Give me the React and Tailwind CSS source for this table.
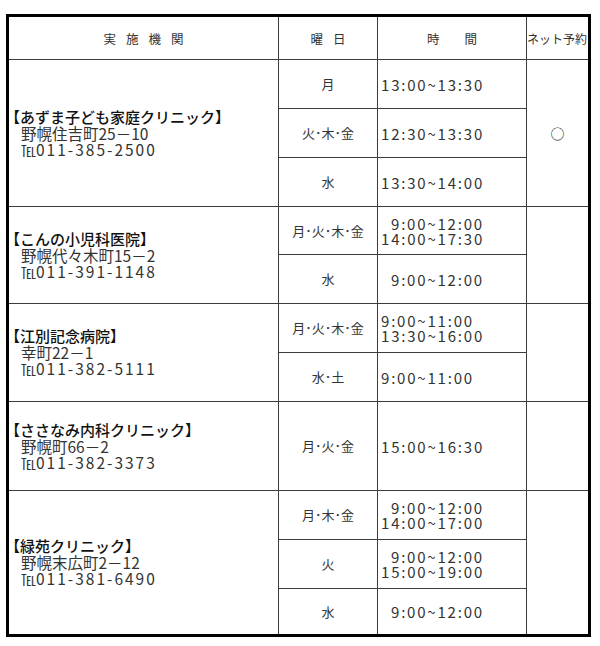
import React from "react"

const font = { fontFamily: '"Noto Sans CJK JP", "Noto Sans", sans-serif' }

const line = "border-[#3c3c3c]"

function Clinic({ name, addr, tel, row, last }) {
  return (
    <div className={`${row} col-start-1 border-r ${last ? "" : "border-b"} ${line} flex flex-col justify-center leading-[16px]`}>
      <div className="text-[15px] font-medium text-[#111] -ml-[4px] whitespace-nowrap">{name}</div>
      <div className="text-[15.5px] text-[#333] pl-[12px] whitespace-nowrap">{addr}</div>
      <div className="text-[15.5px] text-[#333] pl-[12px] whitespace-nowrap">
        <span className="text-[15px]">℡</span>
        <span className="tracking-[2px]">{tel}</span>
      </div>
    </div>
  )
}

function Day({ row, children, last }) {
  return (
    <div className={`${row} col-start-2 border-r ${last ? "" : "border-b"} ${line} flex items-center justify-center text-[13px] text-[#333]`}>
      {children}
    </div>
  )
}

function Time({ row, lines, last }) {
  return (
    <div className={`${row} col-start-3 border-r ${last ? "" : "border-b"} ${line} flex flex-col justify-center pl-[3px] text-[15px] leading-[15px] text-[#333] tracking-[1.8px]`}>
      {lines.map(([t, indent], i) => (
        <div key={i} className={indent ? "pl-[10px]" : ""}>{t}</div>
      ))}
    </div>
  )
}

function Net({ row, children, last }) {
  return (
    <div className={`${row} col-start-4 ${last ? "" : "border-b"} ${line} flex items-center justify-center text-[14px] text-[#222]`}>
      {children}
    </div>
  )
}

export default function App() {
  return (
    <div className="w-[600px] h-[646px] bg-white pt-[14px] pl-[6px]" style={font}>
      <div className="w-[585px] h-[623px] border-[3px] border-black grid grid-cols-[270px_99px_149px_61px] grid-rows-[43px_49px_49px_49px_48px_49px_49px_49px_89px_49px_49px_45px]">
        {/* header */}
        <div className={`border-r border-b ${line} flex items-center justify-center text-[12.5px] text-[#333] tracking-[10px] pl-[10px] pt-[2px]`}>実施機関</div>
        <div className={`border-r border-b ${line} flex items-center justify-center text-[12.5px] text-[#333] tracking-[10px] pl-[10px] pt-[2px]`}>曜日</div>
        <div className={`border-r border-b ${line} flex items-center justify-center text-[12.5px] text-[#333] pt-[2px]`}>時　　間</div>
        <div className={`border-b ${line} flex items-center text-[12px] text-[#333] whitespace-nowrap overflow-hidden pt-[2px]`}>ネット予約</div>

        {/* あずま */}
        <Clinic row="row-start-2 row-span-3" name="【あずま子ども家庭クリニック】" addr="野幌住吉町25－10" tel="011-385-2500" />
        <Day row="row-start-2">月</Day>
        <Time row="row-start-2" lines={[["13:00~13:30"]]} />
        <Day row="row-start-3">火･木･金</Day>
        <Time row="row-start-3" lines={[["12:30~13:30"]]} />
        <Day row="row-start-4">水</Day>
        <Time row="row-start-4" lines={[["13:30~14:00"]]} />
        <Net row="row-start-2 row-span-3">○</Net>

        {/* こんの */}
        <Clinic row="row-start-5 row-span-2" name="【こんの小児科医院】" addr="野幌代々木町15－2" tel="011-391-1148" />
        <Day row="row-start-5">月･火･木･金</Day>
        <Time row="row-start-5" lines={[["9:00~12:00", true], ["14:00~17:30"]]} />
        <Day row="row-start-6">水</Day>
        <Time row="row-start-6" lines={[["9:00~12:00", true]]} />
        <Net row="row-start-5 row-span-2" />

        {/* 江別記念 */}
        <Clinic row="row-start-7 row-span-2" name="【江別記念病院】" addr="幸町22－1" tel="011-382-5111" />
        <Day row="row-start-7">月･火･木･金</Day>
        <Time row="row-start-7" lines={[["9:00~11:00"], ["13:30~16:00"]]} />
        <Day row="row-start-8">水･土</Day>
        <Time row="row-start-8" lines={[["9:00~11:00"]]} />
        <Net row="row-start-7 row-span-2" />

        {/* ささなみ */}
        <Clinic row="row-start-9" name="【ささなみ内科クリニック】" addr="野幌町66－2" tel="011-382-3373" />
        <Day row="row-start-9">月･火･金</Day>
        <Time row="row-start-9" lines={[["15:00~16:30"]]} />
        <Net row="row-start-9" />

        {/* 緑苑 */}
        <Clinic row="row-start-10 row-span-3" last name="【緑苑クリニック】" addr="野幌末広町2－12" tel="011-381-6490" />
        <Day row="row-start-10">月･木･金</Day>
        <Time row="row-start-10" lines={[["9:00~12:00", true], ["14:00~17:00"]]} />
        <Day row="row-start-11">火</Day>
        <Time row="row-start-11" lines={[["9:00~12:00", true], ["15:00~19:00"]]} />
        <Day row="row-start-12" last>水</Day>
        <Time row="row-start-12" last lines={[["9:00~12:00", true]]} />
        <Net row="row-start-10 row-span-3" last />
      </div>
    </div>
  )
}
